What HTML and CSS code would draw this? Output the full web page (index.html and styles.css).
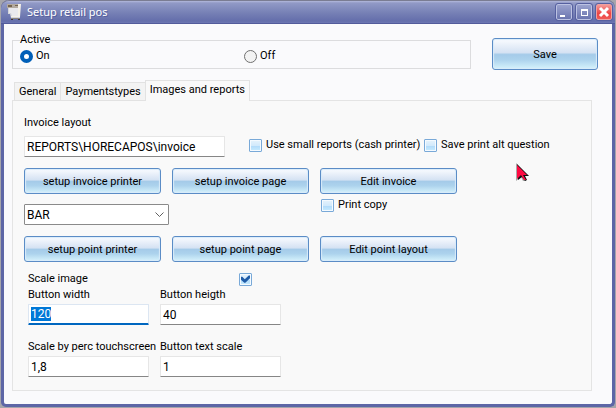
FILE: index.html
```html
<!DOCTYPE html>
<html lang="en">
<head>
<meta charset="utf-8">
<meta name="viewport" content="width=device-width, initial-scale=1">
<title>Setup retail pos</title>
<link rel="stylesheet" href="styles.css">
</head>
<body>
<main class="window">
  <header class="titlebar">
    <svg class="app-icon" width="16" height="18" viewBox="0 0 16 18" aria-hidden="true">
      <path d="M1 5h12v10H4L3 11H1z" fill="#d4d5da"/>
      <path d="M2 5h9v8H5L4 10H2z" fill="#e9e9ed"/>
      <path d="M0 1h13v4H0z" fill="#b3aaa0"/>
      <path d="M1 2h4v2H1zM8 2h3v1H8z" fill="#75654f"/>
      <path d="M11 1h3l-1 13H4v-1h7z" fill="#f5f1e8"/>
      <path d="M4 15h8v1H4z" fill="#8b8580"/>
      <path d="M4 16h2v1H4zM11 16h2v1h-2z" fill="#3d3533"/>
    </svg>
    <h1 class="title">Setup retail pos</h1>
    <div class="controls">
      <button class="control" type="button" aria-label="Minimize"><svg width="14" height="14" viewBox="0 0 14 14"><path d="M3 10h5v2H3z" fill="#fff"/></svg></button>
      <button class="control" type="button" aria-label="Maximize"><svg width="14" height="14" viewBox="0 0 14 14"><path d="M4 4h7v7H4zM5 6v4h5V6z" fill="#fff" fill-rule="evenodd"/></svg></button>
      <button class="control close" type="button" aria-label="Close"><svg width="14" height="14" viewBox="0 0 14 14"><path d="M3 3l8 8M11 3l-8 8" stroke="#fff" stroke-width="3"/></svg></button>
    </div>
  </header>

  <form class="content">
    <div class="top">
      <fieldset class="group">
        <legend>Active</legend>
        <label class="choice"><input class="radio" type="radio" name="active" checked>On</label>
        <label class="choice"><input class="radio" type="radio" name="active">Off</label>
      </fieldset>
      <button class="button save" type="button">Save</button>
    </div>

    <div class="tabs" role="tablist">
      <button class="tab" type="button" role="tab" aria-selected="false">General</button>
      <button class="tab" type="button" role="tab" aria-selected="false">Paymentstypes</button>
      <button class="tab active" type="button" role="tab" aria-selected="true">Images and reports</button>
    </div>

    <section class="panel" role="tabpanel">
      <label for="layout">Invoice layout</label>
      <div class="layout-row">
        <input class="text" id="layout" type="text" value="REPORTS\HORECAPOS\invoice">
        <label class="check small-reports"><input class="box" type="checkbox">Use small reports (cash printer)</label>
        <label class="check"><input class="box" type="checkbox">Save print alt question</label>
      </div>
      <div class="actions">
        <button class="button" type="button">setup invoice printer</button>
        <button class="button" type="button">setup invoice page</button>
        <button class="button" type="button">Edit invoice</button>
      </div>
      <div class="point-row">
        <select class="select" aria-label="Point"><option>BAR</option></select>
        <label class="check print-copy"><input class="box" type="checkbox">Print copy</label>
      </div>
      <div class="actions">
        <button class="button" type="button">setup point printer</button>
        <button class="button" type="button">setup point page</button>
        <button class="button" type="button">Edit point layout</button>
      </div>
      <div class="scale">
        <div class="scale-row"><label for="scale">Scale image</label><input class="box" id="scale" type="checkbox" checked></div>
        <div class="fields">
          <div class="field"><label for="bw">Button width</label><input class="text" id="bw" type="text" value="120"></div>
          <div class="field"><label for="bh">Button heigth</label><input class="text" id="bh" type="text" value="40"></div>
          <div class="field"><label for="sp">Scale by perc touchscreen</label><input class="text" id="sp" type="text" value="1,8"></div>
          <div class="field"><label for="ts">Button text scale</label><input class="text" id="ts" type="text" value="1"></div>
        </div>
      </div>
    </section>
  </form>
  <svg class="pointer" width="14" height="20" viewBox="0 0 14 20" aria-hidden="true">
    <path d="M0 0v18l5-4 2 4h3l-1-5h4z" fill="#a9a9a9"/>
    <path d="M1 1l12 12H9l2 4-2 1-3-4-4 3z" fill="#111"/>
    <path d="M1 2l10 10H7l3 5H8l-3-5-4 4z" fill="#ff0a43"/>
  </svg>
</main>
<script src="main.js"></script>
</body>
</html>
```
FILE: styles.css
```css
* { box-sizing: border-box; }

body {
  margin: 0;
  background: #a5a5ab;
  color: #000;
  font: 11px/14px Roboto, "Liberation Sans", sans-serif;
}

button, input, select { font: inherit; color: inherit; margin: 0; }

.window {
  position: relative;
  display: flex;
  flex-direction: column;
  min-height: calc(100vh - 1px);
  margin: 0 1px 1px;
  border: 3px solid #5d66a6;
  border-top: 0;
  border-radius: 8px 8px 5px 5px;
  background: #fafafc;
}

.titlebar {
  display: flex;
  align-items: center;
  height: 24px;
  margin: 0 -3px;
  padding: 0 3px 0 6px;
  border-top: 1px solid #7a7c92;
  border-bottom: 1px solid #525b9b;
  border-radius: 8px 8px 0 0;
  background: linear-gradient(#b3b9dc, #9199c6 2px, #7680b5 12px, #646eab 20px, #6d77b2);
  color: #fff;
}

.title {
  flex: 1;
  margin: 0 0 0 4px;
  font: 11px/16px "Noto Sans", "Open Sans", sans-serif;
  text-shadow: 1px 1px #56609e;
}

.controls { display: flex; gap: 4px; }

.control {
  width: 16px;
  height: 16px;
  padding: 0;
  border: 1px solid #bcc2e2;
  border-radius: 2px;
  outline: 1px solid #5660a0;
  background: linear-gradient(#9aa2ce, #6c76b0);
}

.control svg { display: block; }

.close {
  border-color: #f0a09f;
  background: linear-gradient(#f49a98, #ee4444 60%, #f05a55);
}

.content {
  flex: 1;
  padding: 9px 20px 12px 8px;
}

.top {
  display: flex;
  align-items: flex-end;
  gap: 21px;
  margin-right: -6px;
}

.group {
  flex: 1;
  display: grid;
  grid-template-columns: 1fr 1fr;
  min-width: 0;
  height: 36px;
  margin: 0 0 1px;
  padding: 2px 2px 4px 7px;
  border: 1px solid #dcdcde;
}

.group legend { padding: 0; line-height: 14px; }

.choice, .check {
  display: flex;
  align-items: center;
  white-space: nowrap;
}

.choice { gap: 3px; height: 14px; }

.radio {
  appearance: none;
  width: 13px;
  height: 13px;
  border: 1px solid #707070;
  border-radius: 50%;
  background: #f3f3f3;
}

.radio:checked { border: 4px solid #005fb8; background: #fff; }

.button {
  height: 26px;
  padding: 1px 4px 0;
  border: 1px solid #5b8cc6;
  border-radius: 3px;
  background: linear-gradient(#fafcff, #d5e2f3 45%, #a5cbe9 52%, #add3ed 70%, #d6f3fc);
  box-shadow: inset 0 0 1px 1px #d9ecfa;
  white-space: nowrap;
}

.save { width: 106px; height: 32px; }

.tabs {
  display: flex;
  align-items: flex-end;
  margin: 10px 0 -1px 2px;
}

.tab {
  height: 19px;
  padding: 0 4px;
  border: 1px solid #e2e2e2;
  border-right: 0;
  background: #f3f3f3;
}

.tab.active {
  height: 21px;
  padding: 0 4px 2px;
  border-right: 1px solid #e2e2e2;
  border-bottom: 0;
  background: #f9f9f9;
}

.panel {
  padding: 15px 11px 13px;
  border: 1px solid #e4e4e4;
  background: #f9f9f9;
}

.panel > label { display: block; }

.layout-row {
  display: flex;
  align-items: flex-start;
  margin: 6px 0 11px;
}

.text {
  width: 100%;
  height: 21px;
  padding: 0 2px;
  border: 1px solid #e6e6e6;
  border-bottom-color: #868686;
  border-radius: 1px;
  background: #fff;
  font-size: 12px;
}

.text:focus {
  outline: 0;
  border-color: #dce6f2;
  border-bottom: 2px solid #0067c0;
  caret-color: #f08030;
}

.text::selection { background: #0078d7; color: #fff; }

.layout-row .text { width: 201px; }

.check { gap: 4px; height: 18px; }

.small-reports { width: 175px; margin-left: 24px; }

.box {
  appearance: none;
  flex: none;
  width: 13px;
  height: 13px;
  border: 1px solid #79a9d8;
  border-radius: 1px;
  background: linear-gradient(#e6f3fc, #d2eafc 50%, #b2dbfa 55%, #c8ecff);
  box-shadow: inset 0 0 0 1px #f4faff;
}

.box:checked::before {
  content: "";
  display: block;
  width: 9px;
  height: 9px;
  margin: 1px;
  background: #1f5ca8;
  clip-path: polygon(0 25%, 14% 25%, 42% 52%, 86% 10%, 100% 10%, 100% 42%, 48% 92%, 36% 92%, 0 58%);
}

.actions {
  display: grid;
  grid-template-columns: repeat(3, 137px);
  gap: 11px;
}

.point-row {
  display: flex;
  align-items: flex-end;
  height: 29px;
  margin: 2px 0 11px;
}

.select {
  appearance: none;
  width: 145px;
  height: 21px;
  padding: 0 2px;
  border: 1px solid #8a8a8a;
  border-radius: 1px;
  background: #fff url("data:image/svg+xml,%3Csvg xmlns='http://www.w3.org/2000/svg' width='9' height='6'%3E%3Cpath d='M.5.5l4 4 4-4' fill='none' stroke='%23606060'/%3E%3C/svg%3E") no-repeat right 4px center;
  font-size: 12px;
}

.print-copy { align-self: flex-start; margin-left: 152px; }

.scale { width: 257px; margin-top: 10px; padding-left: 4px; }

.scale-row {
  display: flex;
  align-items: center;
  justify-content: space-between;
  width: 224px;
  height: 14px;
}

.fields {
  display: grid;
  grid-template-columns: 121px 121px;
  gap: 15px 11px;
  margin-top: 2px;
}

.field {
  display: grid;
  grid-template-columns: 100%;
  gap: 2px;
  white-space: nowrap;
}

.pointer { position: absolute; left: 512px; top: 163px; }
```
FILE: main.js
```js
const width = document.getElementById("bw");
width.focus();
width.select();
```
